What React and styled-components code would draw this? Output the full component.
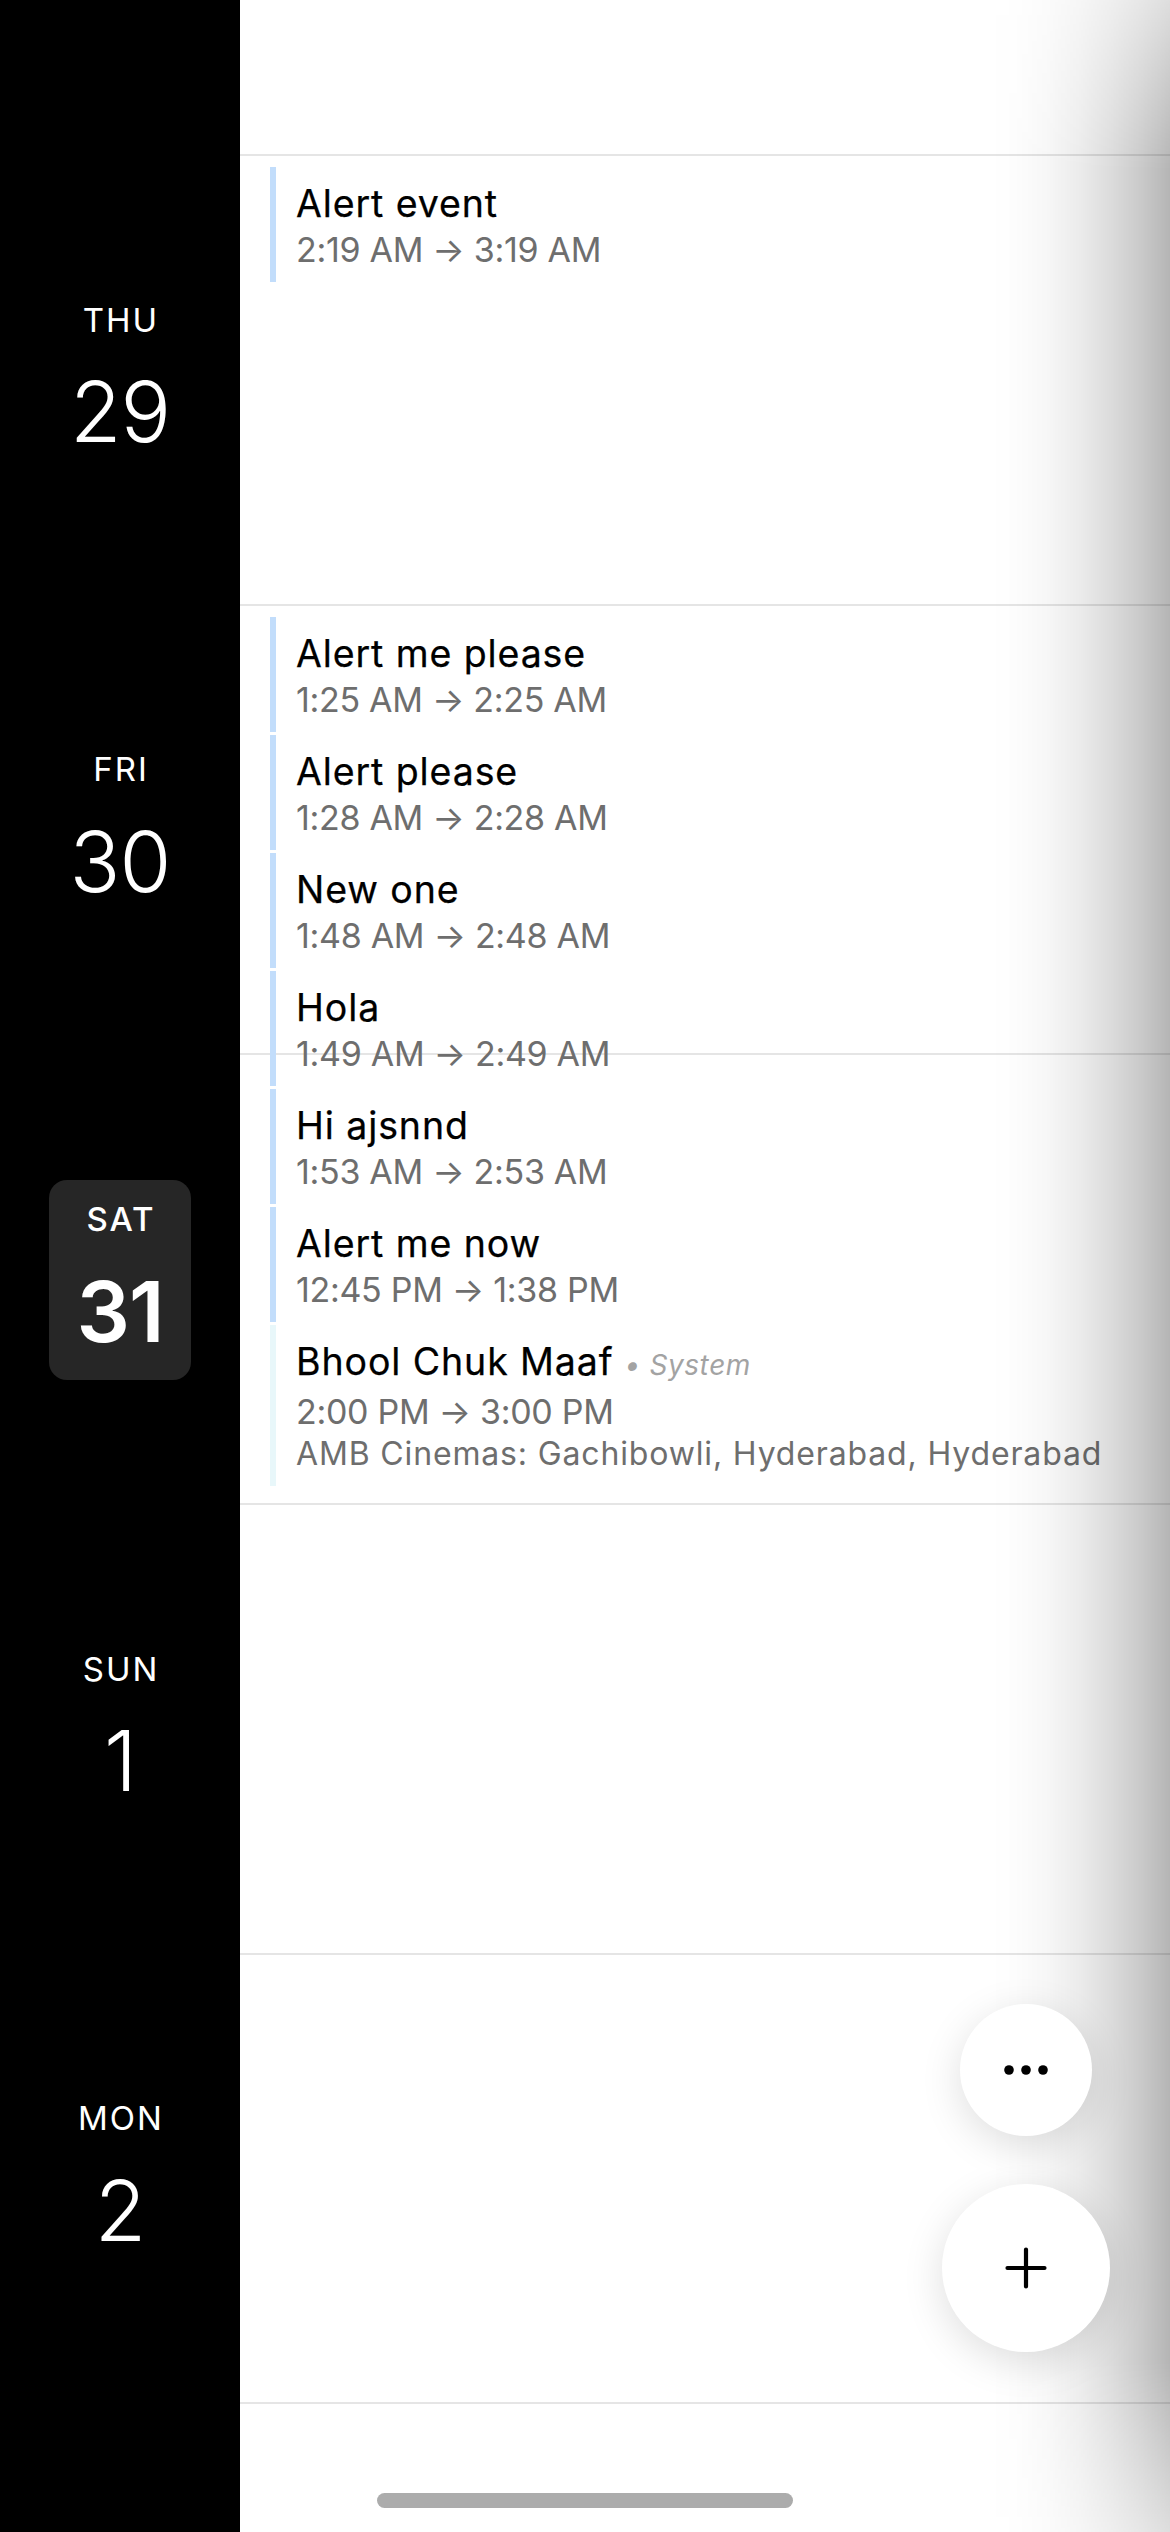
import React from "react";
import styled, { createGlobalStyle } from "styled-components";

const GlobalStyle = createGlobalStyle`
  html, body {
    margin: 0;
    padding: 0;
    background: #ffffff;
    font-family: Inter, "Noto Sans", "Liberation Sans", sans-serif;
    -webkit-font-smoothing: antialiased;
  }
  * { box-sizing: border-box; }
`;

const Screen = styled.div`
  position: relative;
  width: 100%;
  height: 100vh;
  overflow: hidden;
  background: #ffffff;
`;

const Days = styled.div`
  display: flex;
  flex-direction: column;
  margin-top: -293.67px;
`;

const DayRow = styled.section`
  display: grid;
  grid-template-columns: 240px minmax(0, 1fr);
  grid-template-rows: minmax(0, 1fr);
  height: 449.67px;
  flex-shrink: 0;
`;

const DateRail = styled.div`
  background: #000000;
  display: flex;
  align-items: center;
  justify-content: center;
  min-height: 0;
`;

const DateBadge = styled.div`
  width: 142px;
  height: 200px;
  border-radius: 18px;
  background: ${(p) => (p.$today ? "#262626" : "transparent")};
  display: flex;
  flex-direction: column;
  align-items: center;
  padding-top: 19px;
  color: #ffffff;
`;

const Weekday = styled.div`
  font-size: 33px;
  line-height: 40px;
  letter-spacing: 2px;
  font-weight: ${(p) => (p.$today ? 500 : 400)};
  padding-left: 2px;
`;

const DayNum = styled.div`
  font-size: 84px;
  line-height: 100px;
  margin-top: 22.5px;
  font-weight: ${(p) => (p.$today ? 600 : 300)};
  letter-spacing: -1px;
`;

const EventsPane = styled.div`
  border-bottom: 2px solid #e5e5e5;
  padding: 11px 0 0 30px;
  display: flex;
  flex-direction: column;
  gap: 3px;
  min-width: 0;
  min-height: 0;
`;

const EventCard = styled.article`
  display: flex;
  flex-direction: column;
  flex-shrink: 0;
  border-left: 6px solid ${(p) => p.$accent};
  padding: 14px 0 11px 20px;
`;

const EventTitle = styled.div`
  font-size: 37.5px;
  line-height: 45px;
  color: #000000;
  white-space: nowrap;
  letter-spacing: 0.9px;
  -webkit-text-stroke: 0.25px #000;
`;

const SourceTag = styled.span`
  font-size: 28px;
  font-style: italic;
  color: #a3a3a3;
  margin-left: 11px;
  letter-spacing: 0.6px;
  -webkit-text-stroke: 0;
`;

const EventTime = styled.div`
  font-size: 34px;
  line-height: 42px;
  margin-top: 3px;
  color: #6e6e6e;
  white-space: nowrap;
  letter-spacing: -0.3px;
`;

const EventPlace = styled.div`
  font-size: 32px;
  line-height: 42px;
  color: #6e6e6e;
  white-space: nowrap;
  letter-spacing: 0.85px;
`;

const EdgeShade = styled.div`
  position: fixed;
  top: 0;
  right: 0;
  width: 180px;
  height: 100vh;
  pointer-events: none;
  z-index: 1;
  background: linear-gradient(
    to left,
    rgba(0, 0, 0, 0.29) 0px,
    rgba(0, 0, 0, 0.21) 28px,
    rgba(0, 0, 0, 0.14) 58px,
    rgba(0, 0, 0, 0.075) 92px,
    rgba(0, 0, 0, 0.03) 125px,
    rgba(0, 0, 0, 0.008) 155px,
    rgba(0, 0, 0, 0) 180px
  );
  -webkit-mask-image: linear-gradient(
    to bottom,
    rgba(0, 0, 0, 0.45) 0px,
    #000 170px,
    #000 calc(100% - 170px),
    rgba(0, 0, 0, 0.45) 100%
  );
  mask-image: linear-gradient(
    to bottom,
    rgba(0, 0, 0, 0.45) 0px,
    #000 170px,
    #000 calc(100% - 170px),
    rgba(0, 0, 0, 0.45) 100%
  );
`;

const Fabs = styled.div`
  position: fixed;
  right: 60px;
  bottom: 180px;
  z-index: 2;
  display: flex;
  flex-direction: column;
  align-items: center;
  gap: 48px;
`;

const FabButton = styled.button`
  width: ${(p) => p.$size}px;
  height: ${(p) => p.$size}px;
  border-radius: 50%;
  border: none;
  padding: 0;
  background: #ffffff;
  box-shadow: 0 10px 40px rgba(0, 0, 0, 0.13);
  display: flex;
  align-items: center;
  justify-content: center;
`;

const HomeIndicator = styled.div`
  position: fixed;
  left: 50%;
  bottom: 24px;
  transform: translateX(-50%);
  width: 416px;
  height: 15px;
  border-radius: 8px;
  background: #acacac;
  z-index: 3;
`;

const BLUE = "#c2ddfb";
const CYAN = "#e8f7fa";

/* rows scrolled partly out of view (before THU, after MON) carry no label */
const days = [
  { key: "wed", events: [] },
  {
    key: "thu",
    wd: "THU",
    n: "29",
    events: [{ title: "Alert event", time: "2:19 AM → 3:19 AM", accent: BLUE }],
  },
  {
    key: "fri",
    wd: "FRI",
    n: "30",
    events: [
      { title: "Alert me please", time: "1:25 AM → 2:25 AM", accent: BLUE },
      { title: "Alert please", time: "1:28 AM → 2:28 AM", accent: BLUE },
      { title: "New one", time: "1:48 AM → 2:48 AM", accent: BLUE },
      { title: "Hola", time: "1:49 AM → 2:49 AM", accent: BLUE },
      { title: "Hi ajsnnd", time: "1:53 AM → 2:53 AM", accent: BLUE },
      { title: "Alert me now", time: "12:45 PM → 1:38 PM", accent: BLUE },
      {
        title: "Bhool Chuk Maaf",
        source: "System",
        time: "2:00 PM → 3:00 PM",
        place: "AMB Cinemas: Gachibowli, Hyderabad, Hyderabad",
        accent: CYAN,
      },
    ],
  },
  { key: "sat", wd: "SAT", n: "31", today: true, events: [] },
  { key: "sun", wd: "SUN", n: "1", events: [] },
  { key: "mon", wd: "MON", n: "2", events: [] },
  { key: "tue", events: [] },
];

const DotsIcon = () => (
  <svg width="46" height="12" viewBox="0 0 46 12" aria-hidden="true">
    <circle cx="6" cy="6" r="4.8" fill="#000" />
    <circle cx="23" cy="6" r="4.8" fill="#000" />
    <circle cx="40" cy="6" r="4.8" fill="#000" />
  </svg>
);

const PlusIcon = () => (
  <svg width="44" height="44" viewBox="0 0 44 44" aria-hidden="true">
    <path
      d="M22 3.5v37M3.5 22h37"
      stroke="#000"
      strokeWidth="4.2"
      strokeLinecap="round"
      fill="none"
    />
  </svg>
);

export default function App() {
  return (
    <>
      <GlobalStyle />
      <Screen>
        <Days>
          {days.map((d) => (
            <DayRow key={d.key}>
              <DateRail>
                {d.wd && (
                  <DateBadge $today={d.today}>
                    <Weekday $today={d.today}>{d.wd}</Weekday>
                    <DayNum $today={d.today}>{d.n}</DayNum>
                  </DateBadge>
                )}
              </DateRail>
              <EventsPane>
                {d.events.map((e) => (
                  <EventCard key={e.title} $accent={e.accent}>
                    <EventTitle>
                      {e.title}
                      {e.source && <SourceTag>• {e.source}</SourceTag>}
                    </EventTitle>
                    <EventTime>{e.time}</EventTime>
                    {e.place && <EventPlace>{e.place}</EventPlace>}
                  </EventCard>
                ))}
              </EventsPane>
            </DayRow>
          ))}
        </Days>
        <EdgeShade />
        <Fabs>
          <FabButton $size={132} aria-label="More">
            <DotsIcon />
          </FabButton>
          <FabButton $size={168} aria-label="Add event">
            <PlusIcon />
          </FabButton>
        </Fabs>
        <HomeIndicator />
      </Screen>
    </>
  );
}
